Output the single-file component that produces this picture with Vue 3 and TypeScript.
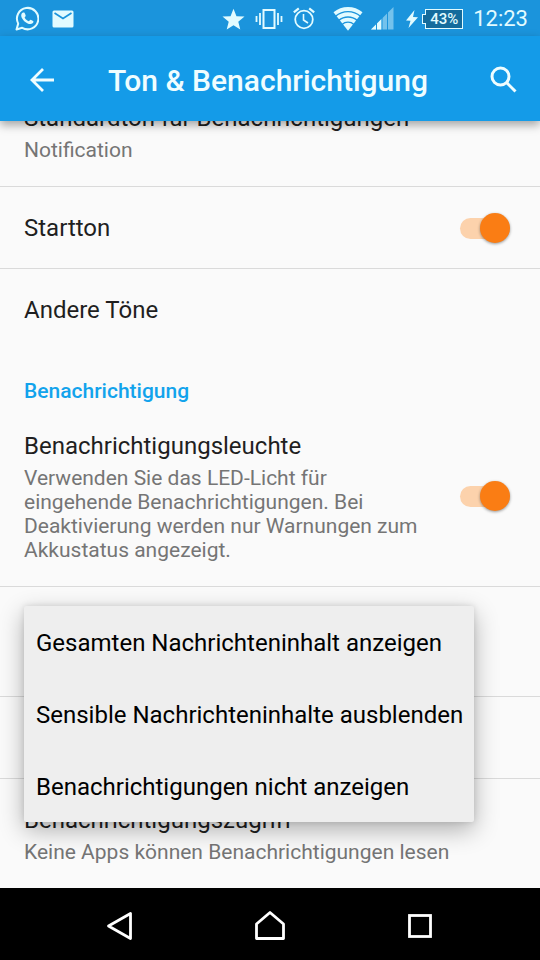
<script setup lang="ts">
import { ref } from 'vue'

const bootSound = ref(true)
const notificationLight = ref(true)

const menuOptions: string[] = [
  'Gesamten Nachrichteninhalt anzeigen',
  'Sensible Nachrichteninhalte ausblenden',
  'Benachrichtigungen nicht anzeigen',
]
</script>

<template>
  <div class="screen">
    <div class="status-bar">
      <div class="status-group notices">
        <svg width="24" height="25" viewBox="0 0 24 25" aria-hidden="true">
          <path d="M1.500 23.500 3.200 17.600A10.700 10.700 0 1 1 7.200 21.800Z" fill="none" stroke="currentColor" stroke-width="2" stroke-linejoin="round" />
          <path d="M8.200 6.500c-.8 0-2 1.100-2 2.900 0 3.600 5.200 8.600 9.200 8.600 1.700 0 3.100-1.200 3.100-2.300 0-.8-2.500-2-3-2-.6 0-1.200 1.500-1.800 1.500-.9 0-4-2.500-4-3.700 0-.5 1-1.100 1-1.700 0-.6-1-3.100-1.500-3.300z" fill="currentColor" />
        </svg>
        <svg width="22" height="18" viewBox="0 0 22 18" aria-hidden="true">
          <rect x=".5" y=".5" width="21" height="17" rx="1.500" fill="currentColor" />
          <path d="m2.500 3 8.500 5.500L19.500 3" fill="none" stroke="#1b94dc" stroke-width="1.700" />
        </svg>
      </div>
      <div class="status-group system">
        <svg width="23" height="22" viewBox="0 0 24 23" aria-hidden="true">
          <path d="m12 .8 3.100 7.700 8.400.5-6.500 5.300 2.100 8.100L12 18l-7.100 4.400L7 14.300.5 9l8.400-.5z" fill="currentColor" />
        </svg>
        <svg width="28" height="22" viewBox="0 0 28 22" aria-hidden="true">
          <rect x="8.500" y="2" width="11" height="18" fill="none" stroke="currentColor" stroke-width="2" />
          <path d="M5 5v12M1.500 8v6M23 5v12M26.500 8v6" stroke="currentColor" stroke-width="1.800" />
        </svg>
        <svg width="22" height="23" viewBox="0 0 22 23" aria-hidden="true">
          <g fill="none" stroke="currentColor">
            <circle cx="11" cy="12.500" r="8.800" stroke-width="1.800" />
            <path d="M10.500 7v6l4.500 3" stroke-width="1.600" />
            <path d="m.8 5.300 5-4M21.200 5.300l-5-4" stroke-width="2.200" />
          </g>
        </svg>
        <svg class="wifi" width="30" height="24" viewBox="0 0 30 24" aria-hidden="true">
          <path d="M.5 5.200a23 23 0 0 1 29 0L15 23.800z" fill="currentColor" />
          <g fill="none" stroke="#1b94dc" stroke-width="1.400">
            <path d="M2.500 9.300a19 19 0 0 1 25 0" />
            <path d="M5.800 13.400a14 14 0 0 1 18.400 0" />
            <path d="M9 17.400a9 9 0 0 1 12 0" />
          </g>
        </svg>
        <svg class="signal" width="23" height="23" viewBox="0 0 23 23" aria-hidden="true">
          <path d="M0 22.500 22.500 0v22.500z" fill="currentColor" opacity=".45" />
          <path d="M0 22.500 10.500 12v10.500z" fill="currentColor" />
          <path d="M5.500 12v11M11 6v17M16.500 3v20" stroke="#1b94dc" stroke-width="1" />
        </svg>
        <svg class="bolt" width="12" height="18" viewBox="0 0 12 18" aria-hidden="true">
          <path d="M8.500 0 0 10.500l4.500.2L2.500 18 12 7.300l-5-.2z" fill="currentColor" />
        </svg>
        <span class="battery">43%</span>
        <span class="clock">12:23</span>
      </div>
    </div>

    <header class="app-bar">
      <button class="icon-button" type="button" aria-label="Zurück">
        <svg width="24" height="24" viewBox="0 0 24 24" aria-hidden="true">
          <path d="M24 12H2M13 1 2 12l11 11" fill="none" stroke="currentColor" stroke-width="2.800" />
        </svg>
      </button>
      <h1>Ton &amp; Benachrichtigung</h1>
      <button class="icon-button" type="button" aria-label="Suchen">
        <svg width="27" height="27" viewBox="0 0 27 27" aria-hidden="true">
          <g fill="none" stroke="currentColor" stroke-width="3">
            <circle cx="10.500" cy="10.500" r="8.500" />
            <path d="m16.500 16.500 9 9" />
          </g>
        </svg>
      </button>
    </header>

    <main class="settings">
      <section class="row">
        <div class="title">Standardton für Benachrichtigungen</div>
        <div class="summary">Notification</div>
      </section>
      <section class="row with-switch">
        <label class="title" for="boot-sound">Startton</label>
        <input id="boot-sound" v-model="bootSound" class="switch" type="checkbox" role="switch" />
      </section>
      <section class="row last-of-group">
        <div class="title">Andere Töne</div>
      </section>
      <h2>Benachrichtigung</h2>
      <section class="row with-switch">
        <div class="text">
          <label class="title" for="notification-light">Benachrichtigungsleuchte</label>
          <div class="summary">
            Verwenden Sie das LED-Licht für eingehende Benachrichtigungen. Bei Deaktivierung werden nur Warnungen zum Akkustatus angezeigt.
          </div>
        </div>
        <input id="notification-light" v-model="notificationLight" class="switch" type="checkbox" role="switch" />
      </section>
      <section class="row two-line menu-anchor">
        <div class="menu" role="menu">
          <button v-for="option in menuOptions" :key="option" type="button" role="menuitem">{{ option }}</button>
        </div>
      </section>
      <section class="row"></section>
      <section class="row last-of-group">
        <div class="title">Benachrichtigungszugriff</div>
        <div class="summary">Keine Apps können Benachrichtigungen lesen</div>
      </section>
    </main>

    <nav class="nav-bar">
      <button type="button" aria-label="Zurück">
        <svg width="30" height="30" viewBox="0 0 30 30" aria-hidden="true">
          <path d="M3.500 15 25.500 2.500v25z" fill="none" stroke="currentColor" stroke-width="2.800" stroke-linejoin="round" />
        </svg>
      </button>
      <button type="button" aria-label="Startseite">
        <svg width="30" height="30" viewBox="0 0 30 30" aria-hidden="true">
          <path d="M1.500 27.500V13L15 1.500 28.500 13v14.500z" fill="none" stroke="currentColor" stroke-width="2.800" stroke-linejoin="round" />
        </svg>
      </button>
      <button type="button" aria-label="Übersicht">
        <svg width="24" height="24" viewBox="0 0 24 24" aria-hidden="true">
          <rect x="1.500" y="1.500" width="21" height="21" fill="none" stroke="currentColor" stroke-width="2.800" />
        </svg>
      </button>
    </nav>
  </div>
</template>

<style>
body {
  margin: 0;
}
</style>

<style scoped>
.screen {
  display: flex;
  flex-direction: column;
  height: 100vh;
  background: #fafafa;
  color: #1f1f1f;
  font-family: Roboto, 'Liberation Sans', sans-serif;
}

svg {
  display: block;
  flex: none;
}

button {
  margin: 0;
  padding: 0;
  border: 0;
  background: none;
  color: inherit;
  font: inherit;
}

.status-bar {
  display: flex;
  flex: none;
  align-items: center;
  justify-content: space-between;
  box-sizing: border-box;
  height: 36px;
  padding: 1px 12px 0 15px;
  background: #1b94dc;
  color: #e2fbff;
}

.status-group {
  display: flex;
  align-items: center;
}

.notices {
  gap: 13px;
}

.system {
  gap: 10px;
}

.wifi {
  margin-left: 8px;
}

.signal {
  margin-left: -2px;
}

.bolt {
  margin-left: 2px;
}

.battery {
  position: relative;
  box-sizing: border-box;
  width: 38px;
  height: 20px;
  margin-left: -3px;
  border: 1px solid currentColor;
  background: #146b9c;
  font-size: 15px;
  font-weight: 500;
  line-height: 19px;
  text-align: center;
}

.battery::before {
  content: '';
  position: absolute;
  top: 4px;
  left: -4px;
  width: 3px;
  height: 8px;
  border: 1px solid currentColor;
  border-right: 0;
  background: #146b9c;
}

.clock {
  font-size: 22px;
  line-height: 28px;
}

.app-bar {
  position: relative;
  z-index: 1;
  display: flex;
  flex: none;
  align-items: center;
  box-sizing: border-box;
  height: 85px;
  padding: 2px 7px 0 12px;
  background: #149be8;
  box-shadow: 0 4px 9px rgba(0, 0, 0, 0.35);
  color: #effdff;
}

.icon-button {
  display: grid;
  place-items: center;
  width: 60px;
  height: 60px;
}

h1 {
  flex: 1;
  margin: 0;
  padding: 2px 0 0 36px;
  font-size: 30px;
  font-weight: 500;
  line-height: 36px;
}

.settings {
  display: flex;
  flex: 1;
  flex-direction: column;
  justify-content: flex-end;
  min-height: 0;
  overflow: hidden;
}

.row {
  box-sizing: border-box;
  flex: none;
  min-height: 82px;
  padding: 26px 24px 24px;
  border-bottom: 1px solid #dadada;
}

.last-of-group {
  border-bottom: 0;
}

.two-line {
  min-height: 110px;
}

.with-switch {
  display: flex;
  align-items: center;
  justify-content: space-between;
}

.text {
  width: 400px;
}

.title {
  display: block;
  font-size: 24px;
  line-height: 31px;
}

.summary {
  margin-top: 4px;
  color: #757575;
  font-size: 21px;
  line-height: 24px;
}

h2 {
  flex: none;
  margin: 0;
  padding: 28px 24px 1px;
  color: #12a3ec;
  font-size: 21px;
  font-weight: 500;
  line-height: 25px;
}

.switch {
  position: relative;
  flex: none;
  width: 50px;
  height: 21px;
  margin: 0 6px 0 0;
  border-radius: 11px;
  background: #cccccc;
  appearance: none;
}

.switch::before {
  content: '';
  position: absolute;
  top: -5px;
  left: 0;
  width: 30px;
  height: 30px;
  border-radius: 50%;
  background: #f5f5f5;
  box-shadow: 0 1px 3px rgba(0, 0, 0, 0.4);
}

.switch:checked {
  background: #fcd2ac;
}

.switch:checked::before {
  left: 20px;
  background: #fa7d14;
}

.menu-anchor {
  position: relative;
}

.menu {
  position: absolute;
  top: 19px;
  left: 24px;
  z-index: 1;
  border-radius: 2px;
  background: #eeeeee;
  box-shadow: 0 8px 24px rgba(0, 0, 0, 0.3), 0 0 6px rgba(0, 0, 0, 0.12);
  color: #000000;
}

.menu button {
  display: block;
  width: 100%;
  height: 72px;
  padding: 2px 11px 0 12px;
  font-size: 24px;
  text-align: left;
  white-space: nowrap;
}

.nav-bar {
  display: flex;
  flex: none;
  align-items: stretch;
  justify-content: center;
  box-sizing: border-box;
  height: 72px;
  padding: 4px 45px 0;
  background: #000000;
  color: #ffffff;
}

.nav-bar button {
  display: grid;
  flex: 1;
  place-items: center;
}
</style>
